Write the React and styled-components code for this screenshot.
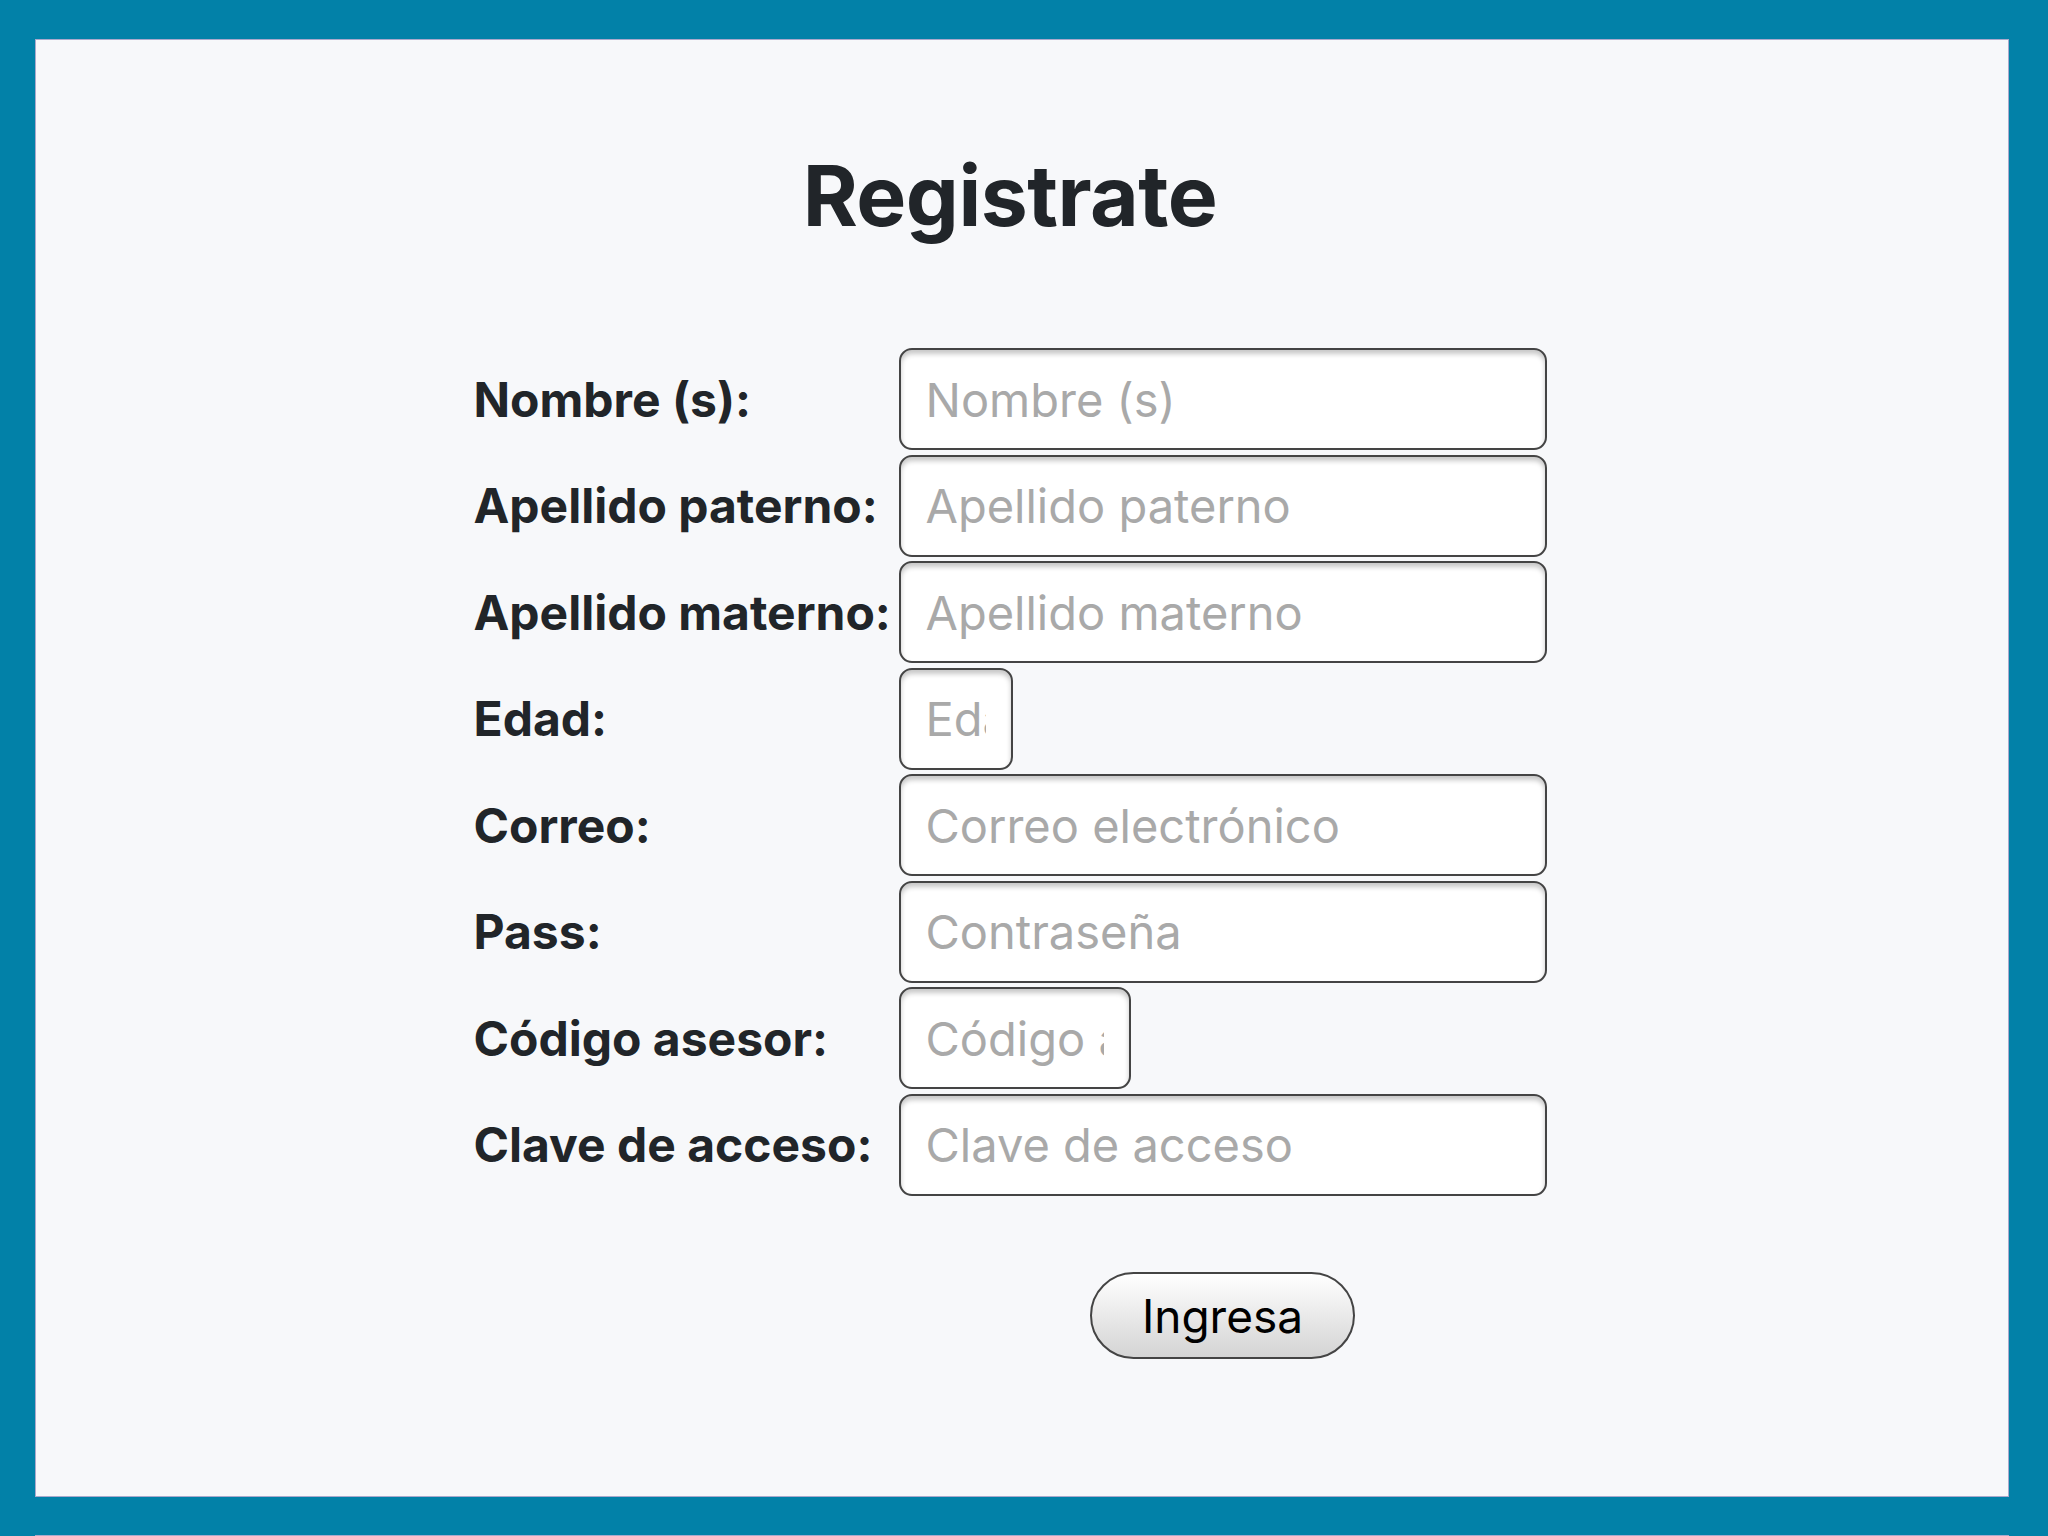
import React from "react";
import styled, { createGlobalStyle } from "styled-components";

const GlobalStyle = createGlobalStyle`
  html, body {
    margin: 0;
    padding: 0;
    background: #0281a8;
  }
  body {
    font-family: Inter, "Noto Sans", sans-serif;
    color: #212529;
  }
`;

const Page = styled.div`
  padding: 39px 39px 38px 35px;
  display: flex;
  flex-direction: column;
  gap: 38px;
`;

const Panel = styled.main`
  background: #f7f8fa;
  border: 1px solid #aaa9cc;
  height: 1458px;
  box-sizing: border-box;
  padding: 105px 24px 0 0;
  display: flex;
  flex-direction: column;
  align-items: center;
`;

const NextPanel = styled.div`
  background: #f7f8fa;
  border: 1px solid #aaa9cc;
  height: 200px;
`;

const Title = styled.h1`
  margin: 0 0 101px;
  font-size: 84px;
  line-height: 102px;
  font-weight: 700;
  letter-spacing: -0.5px;
  color: #212529;
`;

const Form = styled.form`
  display: grid;
  grid-template-columns: 425px 648px;
  row-gap: 4.5px;
  align-items: center;
`;

const Label = styled.label`
  font-size: 48px;
  font-weight: 700;
  color: #212529;
  white-space: nowrap;
`;

const Field = styled.input`
  box-sizing: border-box;
  width: ${(p) => p.$width || "648px"};
  height: 102px;
  padding: 0 25px;
  border: 2px solid #444;
  border-radius: 13px;
  background: #fff;
  box-shadow: inset 0 4px 5px rgba(0, 0, 0, 0.22);
  font-family: Inter, "Noto Sans", sans-serif;
  font-size: 47px;
  color: #212529;
  outline: none;

  &::placeholder {
    color: #a9a9a9;
  }
`;

const ButtonCell = styled.div`
  grid-column: 2;
  display: flex;
  justify-content: center;
  padding-top: 72px;
`;

const Submit = styled.button`
  width: 265px;
  height: 87px;
  border: 2px solid #444;
  border-radius: 44px;
  background: linear-gradient(#ffffff, #d4d4d4);
  font-family: Inter, "Noto Sans", sans-serif;
  font-size: 46px;
  color: #000;
  padding: 0;
`;

const fields = [
  { id: "nombre", label: "Nombre (s):", placeholder: "Nombre (s)" },
  { id: "paterno", label: "Apellido paterno:", placeholder: "Apellido paterno" },
  { id: "materno", label: "Apellido materno:", placeholder: "Apellido materno" },
  { id: "edad", label: "Edad:", placeholder: "Edad", width: "114px" },
  { id: "correo", label: "Correo:", placeholder: "Correo electrónico" },
  { id: "pass", label: "Pass:", placeholder: "Contraseña", type: "password" },
  { id: "codigo", label: "Código asesor:", placeholder: "Código asesor", width: "232px" },
  { id: "clave", label: "Clave de acceso:", placeholder: "Clave de acceso" },
];

export default function App() {
  return (
    <>
      <GlobalStyle />
      <Page>
        <Panel>
          <Title>Registrate</Title>
          <Form onSubmit={(e) => e.preventDefault()}>
            {fields.map((f) => (
              <React.Fragment key={f.id}>
                <Label htmlFor={f.id}>{f.label}</Label>
                <Field
                  id={f.id}
                  type={f.type || "text"}
                  placeholder={f.placeholder}
                  $width={f.width}
                />
              </React.Fragment>
            ))}
            <ButtonCell>
              <Submit type="submit">Ingresa</Submit>
            </ButtonCell>
          </Form>
        </Panel>
        <NextPanel />
      </Page>
    </>
  );
}
